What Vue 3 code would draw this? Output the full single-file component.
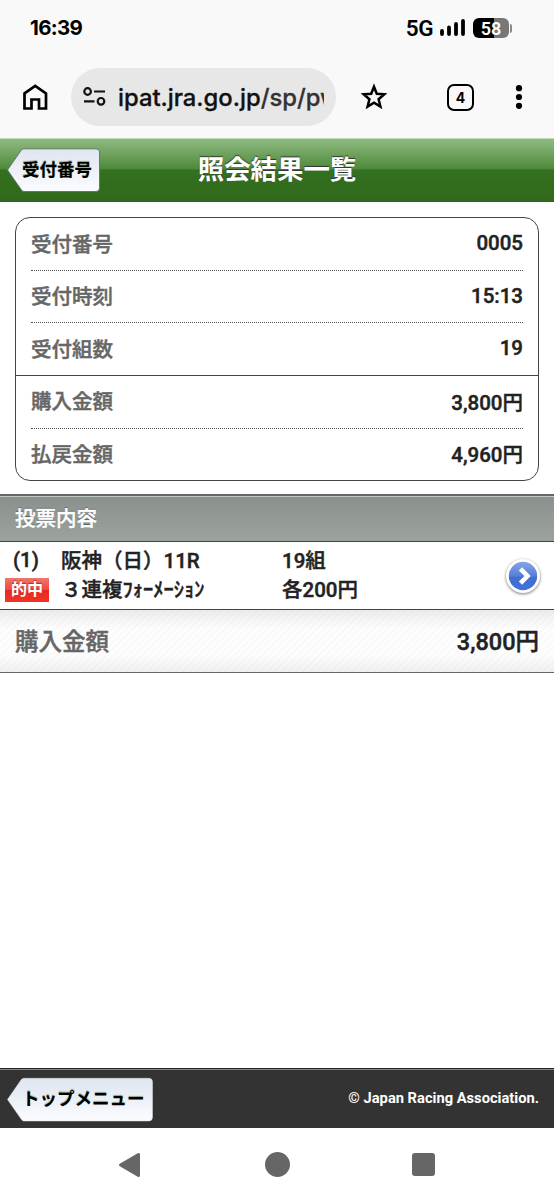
<script setup>
import {ref} from "vue";

//受付情報
let receipt = ref([
  {label: "受付番号", value: "0005"},
  {label: "受付時刻", value: "15:13"},
  {label: "受付組数", value: "19"},
  {label: "購入金額", value: "3,800円", solid: true},
  {label: "払戻金額", value: "4,960円"},
])

//投票内容
let bets = ref([
  {no: "(1)", race: "阪神（日）11R", count: "19組", hit: true, type: "３連複ﾌｫｰﾒｰｼｮﾝ", unit: "各200円"},
])

let total = ref("3,800円")
</script>

<template>
  <div class="screen">
    <!--ステータスバー-->
    <div class="status">
      <span class="clock">16:39</span>
      <span class="net">5G</span>
      <svg class="signal" width="26" height="20" viewBox="0 0 26 20">
        <path d="M2 13V16M9 9.500V16M16 6V16M23 3V16" stroke="#000" stroke-width="3.800" stroke-linecap="round"/>
      </svg>
      <div class="battery"><span>58</span></div>
      <i class="battery-tip"></i>
    </div>

    <!--ブラウザのツールバー-->
    <div class="toolbar">
      <svg class="home" width="26" height="28" viewBox="0 0 26 28">
        <path d="M2.500 10.400L13.200 2.800L24 10.400V25.500H17V16.500H9.500V25.500H2.500Z" fill="none" stroke="#000" stroke-width="2.700"/>
      </svg>
      <div class="url">
        <svg width="24" height="20" viewBox="0 0 24 20" fill="none" stroke="#111" stroke-width="2.200">
          <circle cx="4.600" cy="4.500" r="3.300"/>
          <path d="M11 4.500H22M1 14.300H11.500"/>
          <circle cx="18" cy="14.300" r="3.300"/>
        </svg>
        <div class="address">ipat.jra.go.jp<span>/sp/pw</span></div>
      </div>
      <svg class="star" width="30" height="30" viewBox="0 0 30 30">
        <path d="M15 4.700L17.800 11.700L25.300 12.300L19.600 17.200L21.400 24.500L15 20.600L8.600 24.500L10.400 17.200L4.700 12.300L12.200 11.700Z" fill="none" stroke="#000" stroke-width="2.500"/>
      </svg>
      <div class="tabs">4</div>
      <svg class="more" width="8" height="28" viewBox="0 0 8 28">
        <circle cx="4" cy="5.200" r="3.100"/>
        <circle cx="4" cy="14" r="3.100"/>
        <circle cx="4" cy="22.800" r="3.100"/>
      </svg>
    </div>

    <!--ヘッダー-->
    <header class="header">
      <a class="back">
        <svg width="94" height="46" viewBox="0 0 94 46">
          <defs>
            <linearGradient id="g1" x1="0" y1="0" x2="0" y2="1">
              <stop offset="0" stop-color="#dfe5ef"/>
              <stop offset="1" stop-color="#fbfcff"/>
            </linearGradient>
          </defs>
          <path d="M0.500 22L14 2.500Q15 0.800 17 0.800H89Q92.500 0.800 92.500 4V40Q92.500 43.500 89 43.500H17Q15.500 43.500 14.500 42Z" fill="url(#g1)" stroke="#5d7260" stroke-width="0.900"/>
        </svg>
        <span>受付番号</span>
      </a>
      <h1>照会結果一覧</h1>
    </header>

    <!--受付情報-->
    <dl class="card">
      <div v-for="item in receipt" :key="item.label" class="line" :class="{solid: item.solid}">
        <div class="inner">
          <dt>{{item.label}}</dt>
          <dd>{{item.value}}</dd>
        </div>
      </div>
    </dl>

    <!--投票内容-->
    <h2 class="section">投票内容</h2>
    <div v-for="bet in bets" :key="bet.no" class="bet">
      <span class="no">{{bet.no}}</span>
      <span class="race">{{bet.race}}</span>
      <span>{{bet.count}}</span>
      <span class="hit"><b v-if="bet.hit">的中</b></span>
      <span>{{bet.type}}</span>
      <span>{{bet.unit}}</span>
      <svg class="arrow" width="40" height="42" viewBox="0 0 40 42">
        <defs>
          <linearGradient id="g2" x1="0" y1="0" x2="0" y2="1">
            <stop offset="0" stop-color="#86a5e4"/>
            <stop offset="0.500" stop-color="#5580d8"/>
            <stop offset="0.550" stop-color="#416fd0"/>
            <stop offset="1" stop-color="#3f70dc"/>
          </linearGradient>
        </defs>
        <circle class="ring" cx="20" cy="20" r="17" fill="#fff"/>
        <circle cx="20" cy="20" r="14.200" fill="url(#g2)"/>
        <path d="M17.500 12.800L24.500 20L17.500 27.200" fill="none" stroke="#fff" stroke-width="4.600"/>
      </svg>
    </div>
    <div class="total">
      <span>購入金額</span>
      <b>{{total}}</b>
    </div>

    <!--フッター-->
    <footer class="footer">
      <a class="back">
        <svg width="147" height="46" viewBox="0 0 147 46">
          <defs>
            <linearGradient id="g3" x1="0" y1="0" x2="0" y2="1">
              <stop offset="0" stop-color="#dde5f0"/>
              <stop offset="1" stop-color="#fbfcff"/>
            </linearGradient>
          </defs>
          <path d="M0.500 22.500L14 3Q15 1.300 17 1.300H142Q145.500 1.300 145.500 5V40Q145.500 44 142 44H17Q15.500 44 14.500 42.500Z" fill="url(#g3)" stroke="#ddd" stroke-width="0.500"/>
        </svg>
        <span>トップメニュー</span>
      </a>
      <small>© Japan Racing Association.</small>
    </footer>

    <!--ナビゲーションバー-->
    <div class="nav">
      <svg width="24" height="26" viewBox="0 0 24 26">
        <path d="M2.500 13L20.500 2.500V23.500Z" fill="#666" stroke="#666" stroke-width="3" stroke-linejoin="round"/>
      </svg>
      <i class="circle"></i>
      <i class="square"></i>
    </div>
  </div>
</template>

<style>
body{
  margin: 0;
  background: #fff;
}
</style>

<style scoped>
.screen{
  width: 554px;
  height: 1200px;
  display: flex;
  flex-direction: column;
  overflow: hidden;
  background: #fff;
  color: #222;
  font-family: Roboto, "Noto Sans CJK JP", sans-serif;
  font-weight: 700;
}
svg{
  display: block;
  flex: none;
}

/*ステータスバー*/
.status{
  height: 56px;
  flex: none;
  box-sizing: border-box;
  padding: 0 42px 0 30px;
  display: flex;
  align-items: center;
  background: #f9f9f9;
  color: #000;
}
.clock{
  font-family: Inter, sans-serif;
  font-size: 20.5px;
  letter-spacing: -0.7px;
  margin-right: auto;
  padding-bottom: 2px;
}
.net{
  font-size: 22.5px;
  font-weight: 600;
  letter-spacing: -0.5px;
  margin-right: 7px;
}
.signal{
  margin-right: 7px;
}
.battery{
  width: 36px;
  height: 20px;
  border-radius: 6px;
  background: linear-gradient(90deg, #000 58%, #777 58%);
  color: #fff;
  font-size: 18px;
  font-weight: 600;
  line-height: 21px;
  text-align: center;
}
.battery-tip{
  width: 2px;
  height: 9px;
  margin-left: 1px;
  border-radius: 0 2px 2px 0;
  background: #888;
}

/*ツールバー*/
.toolbar{
  height: 82px;
  flex: none;
  box-sizing: border-box;
  padding: 0 31px 0 22px;
  display: flex;
  align-items: center;
  background: #f9f9f9;
}
.url{
  width: 265px;
  height: 58px;
  margin-left: 23px;
  box-sizing: border-box;
  padding-left: 12px;
  display: flex;
  align-items: center;
  border-radius: 29px;
  background: #e7e7e7;
}
.address{
  width: 206px;
  margin-left: 11px;
  overflow: hidden;
  white-space: nowrap;
  font-family: Inter, sans-serif;
  font-size: 23.8px;
  font-weight: 500;
  color: #111;
  -webkit-text-stroke: 0.3px;
}
.address span{
  color: #333;
}
.star{
  margin-left: 23px;
}
.tabs{
  width: 27px;
  height: 27px;
  margin-left: 58px;
  box-sizing: border-box;
  border: 2.6px solid #000;
  border-width: 2.6px;
  border-radius: 7px;
  color: #000;
  font-family: Inter, sans-serif;
  font-size: 14px;
  line-height: 23px;
  text-align: center;
}
.more{
  margin-left: auto;
}

/*ヘッダー*/
.header{
  height: 64px;
  flex: none;
  box-sizing: border-box;
  position: relative;
  border-top: 1px solid #c5d8be;
  border-bottom: 1px solid #3c5a30;
  background: linear-gradient(#8fba81 0, #4f8a3b 48%, #33701f 50%, #30691b 100%);
}
.header h1{
  margin: 0;
  font-size: 26.4px;
  line-height: 62px;
  text-align: center;
  color: #fff;
  text-shadow: 0 -1px 1px #333;
}
.back{
  position: relative;
  display: block;
  color: #000;
  font-size: 17.5px;
}
.header .back{
  position: absolute;
  left: 7px;
  top: 9px;
}
.back span{
  position: absolute;
  left: 15px;
  top: 0;
  line-height: 45px;
  white-space: nowrap;
  text-shadow: 0 -1px 1px #8b9c8b;
}

/*受付情報*/
.card{
  margin: 15px 15px 13px;
  border: 1px solid #444;
  border-radius: 15px;
  flex: none;
  height: 264px;
  box-sizing: border-box;
  font-size: 20.5px;
  font-weight: 500;
  -webkit-text-stroke: 0.45px;
  display: flex;
  flex-direction: column;
}
.line{
  flex: 1;
  padding: 0 15px;
}
.line.solid{
  border-top: 1px solid #444;
}
.inner{
  height: 100%;
  box-sizing: border-box;
  display: flex;
  justify-content: space-between;
  align-items: center;
  padding-bottom: 2px;
}
.line + .line:not(.solid) .inner{
  border-top: 1px dotted #555;
}
dt{
  color: #666;
  padding-bottom: 1px;
}
dd{
  margin: 0;
}

/*投票内容*/
.section{
  height: 48px;
  flex: none;
  box-sizing: border-box;
  margin: 0;
  padding-left: 15px;
  border-top: 2px solid #666;
  border-bottom: 1px solid #444;
  background: linear-gradient(#c4c8c5 0, #c4c8c5 1px, #8b918d 1px, #9ba39d 100%);
  color: #fff;
  font-size: 20.5px;
  font-weight: 500;
  -webkit-text-stroke: 0.45px;
  line-height: 46px;
  text-shadow: 0 -1px 1px #555;
}
.bet{
  height: 68px;
  flex: none;
  box-sizing: border-box;
  position: relative;
  padding: 5px 0 0 5px;
  border-bottom: 1px solid #444;
  display: grid;
  grid-template-columns: 56px 221px 1fr;
  grid-template-rows: 29px 29px;
  align-items: center;
  font-size: 20.5px;
  font-weight: 500;
  -webkit-text-stroke: 0.45px;
  line-height: 29px;
  white-space: nowrap;
}
.no{
  padding: 0 0 3px 8px;
}
.hit b{
  display: block;
  width: 44px;
  height: 24px;
  margin-bottom: 2px;
  background: linear-gradient(#f0776d 0, #ee4a40 48%, #e9291f 50%, #f23328 100%);
  color: #fff;
  font-size: 16px;
  font-weight: 700;
  -webkit-text-stroke: 0;
  line-height: 23px;
  text-align: center;
  text-shadow: 0 -1px 1px #a33;
}
.arrow{
  position: absolute;
  right: 11px;
  top: 14px;
}
.ring{
  filter: drop-shadow(0 1px 1.5px #777);
}
.total{
  height: 63px;
  flex: none;
  box-sizing: border-box;
  padding: 0 15px 3px;
  border-bottom: 1px solid #666;
  display: flex;
  justify-content: space-between;
  align-items: center;
  font-size: 23.5px;
  font-weight: 500;
  -webkit-text-stroke: 0.45px;
  background:
    linear-gradient(rgba(0,0,0,.07), rgba(0,0,0,0) 30%, rgba(0,0,0,0) 70%, rgba(0,0,0,.05)),
    repeating-linear-gradient(135deg, #fff 0, #f9f9f9 2.5px, #fff 5px);
}
.total span{
  color: #666;
}
.total b{
  font-weight: 500;
}

/*フッター*/
.footer{
  height: 60px;
  flex: none;
  box-sizing: border-box;
  margin-top: auto;
  padding: 8px 15px 0 7px;
  border-top: 1px solid #222;
  display: flex;
  justify-content: space-between;
  background: linear-gradient(#888 0, #888 1px, #333 1px);
}
.footer small{
  color: #fff;
  font-size: 14.7px;
  line-height: 42px;
}
.nav{
  height: 72px;
  flex: none;
  box-sizing: border-box;
  padding: 1px 119px 0 118px;
  display: flex;
  justify-content: space-between;
  align-items: center;
}
.circle{
  width: 25px;
  height: 25px;
  border-radius: 50%;
  background: #666;
}
.square{
  width: 23px;
  height: 23px;
  border-radius: 3px;
  background: #666;
}
</style>
